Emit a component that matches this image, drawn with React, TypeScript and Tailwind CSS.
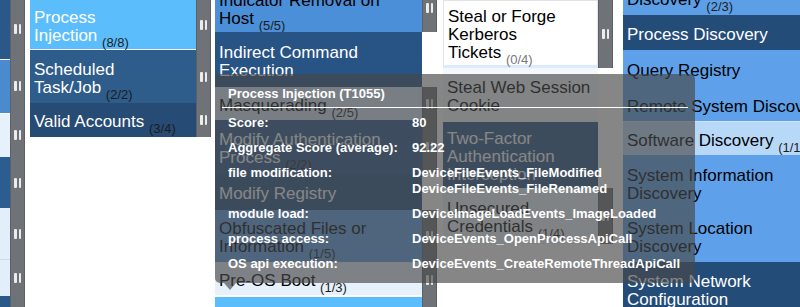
import React from 'react';

type Cell = {
  name?: string;
  count?: string;
  h: string;
  bg: string;
  fg?: string;
  handle?: boolean;
  countColor?: string;
  border?: string;
};

const Handle = () => (
  <div className="flex w-[15px] shrink-0 items-center justify-center gap-[2px] border-x border-[#5d6165] bg-[#6f7378]">
    <span className="h-[10px] w-[2.5px] rounded-[1px] bg-[#ececec]" />
    <span className="h-[10px] w-[2.5px] rounded-[1px] bg-[#ececec]" />
  </div>
);

const Row = ({ c, cellW }: { c: Cell; cellW: string }) => (
  <div className={`flex shrink-0 ${c.h}`}>
    <div className={`flex shrink-0 items-center px-[4px] pt-[4px] text-[17px] leading-[18px] ${cellW} ${c.bg} ${c.fg ?? 'text-black'} ${c.border ?? ''}`}>
      {c.name && (
        <span>
          {c.name}
          {c.count && (
            <>
              {'\u00a0'}
              <span className={`align-[-6px] text-[13px] leading-[0] ${c.countColor ?? 'text-[#1c1c1c]'}`}>{c.count}</span>
            </>
          )}
        </span>
      )}
    </div>
    {c.handle ? <Handle /> : <div className="w-[15px] shrink-0" />}
  </div>
);

const colA: Cell[] = [
  { h: 'h-[61px]', bg: 'bg-[#2a5888]', handle: true },
  { h: 'h-[54px]', bg: 'bg-[#4c8ad0]', handle: true, border: 'border-t border-white' },
  { h: 'h-[44px]', bg: 'bg-[#e7f1fc]', handle: true, border: 'border-t border-white' },
  { h: 'h-[51px]', bg: 'bg-[#2c5d90]', handle: true },
  { h: 'h-[51px]', bg: 'bg-[#e3eefb]', handle: true },
  { h: 'h-[37px]', bg: 'bg-[#e3eefb]', handle: true, border: 'border-t border-[#c9dcf2]' },
  { h: 'h-[40px]', bg: 'bg-[#2a5888]', handle: true },
];

const colB: Cell[] = [
  { name: 'Process Injection', count: '(8/8)', h: 'h-[50px]', bg: 'bg-[#5cbdfd]', fg: 'text-white', handle: true, border: 'border-b border-white' },
  { name: 'Scheduled Task/Job', count: '(2/2)', h: 'h-[53px]', bg: 'bg-[#2e5c8b]', fg: 'text-white', handle: true },
  { name: 'Valid Accounts', count: '(3/4)', h: 'h-[34px]', bg: 'bg-[#264b74]', fg: 'text-white', handle: true },
];

const colC: Cell[] = [
  { name: 'Indicator Removal on Host', count: '(5/5)', h: 'h-[48px]', bg: 'bg-[#4b8fd8]', handle: true },
  { name: 'Indirect Command Execution', h: 'h-[55px]', bg: 'bg-[#285385]', fg: 'text-white' },
  { name: 'Masquerading', count: '(2/5)', h: 'h-[33px]', bg: 'bg-[#d6e7f9]', handle: true },
  { name: 'Modify Authentication Process', count: '(2/2)', h: 'h-[54px]', bg: 'bg-[#2b5a8c]', fg: 'text-white', handle: true },
  { name: 'Modify Registry', h: 'h-[36px]', bg: 'bg-[#285385]', fg: 'text-white' },
  { name: 'Obfuscated Files or Information', count: '(1/5)', h: 'h-[52px]', bg: 'bg-[#5f9fe4]', handle: true },
  { name: 'Pre-OS Boot', count: '(1/3)', h: 'h-[35px]', bg: 'bg-[#e6f1fc]', handle: true, border: 'border-b-2 border-white' },
  { name: 'Process Injection', count: '(8/8)', h: 'h-[45px]', bg: 'bg-[#5cbdfd]', fg: 'text-white', handle: true },
];

const colD: Cell[] = [
  { name: 'Steal or Forge Kerberos Tickets', count: '(0/4)', h: 'h-[68px]', bg: 'bg-white', handle: true, countColor: 'text-[#777]', border: 'border border-[#e3e3e3] border-b-[3px] border-b-[#dcebfb]' },
  { name: 'Steal Web Session Cookie', h: 'h-[54px]', bg: 'bg-[#f4f8fd]' },
  { name: 'Two-Factor Authentication Interception', h: 'h-[66px]', bg: 'bg-[#2b5687]', fg: 'text-white' },
  { name: 'Unsecured Credentials', count: '(1/4)', h: 'h-[56px]', bg: 'bg-[#eef5fd]', handle: true },
];

const colE: Cell[] = [
  { name: 'Permission Groups Discovery', count: '(2/3)', h: 'h-[52px]', bg: 'bg-[#5c9fe7]' },
  { name: 'Process Discovery', h: 'h-[35px]', bg: 'bg-[#244c79]', fg: 'text-white' },
  { name: 'Query Registry', h: 'h-[38px]', bg: 'bg-[#5ea1ea]' },
  { name: 'Remote System Discovery', h: 'h-[33px]', bg: 'bg-[#5ea1ea]' },
  { name: 'Software Discovery', count: '(1/1)', h: 'h-[34px]', bg: 'bg-[#b8d8f8]', border: 'border-t border-[#cfe4fa]' },
  { name: 'System Information Discovery', h: 'h-[55px]', bg: 'bg-[#5ea1ea]' },
  { name: 'System Location Discovery', h: 'h-[52px]', bg: 'bg-[#5ea1ea]' },
  { name: 'System Network Configuration', h: 'h-[53px]', bg: 'bg-[#244c79]', fg: 'text-white' },
];

const tipRows: { label: string; values: string[] }[] = [
  { label: 'Score:', values: ['80'] },
  { label: 'Aggregate Score (average):', values: ['92.22'] },
  { label: 'file modification:', values: ['DeviceFileEvents_FileModified', 'DeviceFileEvents_FileRenamed'] },
  { label: 'module load:', values: ['DeviceImageLoadEvents_ImageLoaded'] },
  { label: 'process access:', values: ['DeviceEvents_OpenProcessApiCall'] },
  { label: 'OS api execution:', values: ['DeviceEvents_CreateRemoteThreadApiCall'] },
];

const Tooltip = () => (
  <div className="absolute left-[215px] top-[74px] h-[209px] w-[480px] rounded-[5px] bg-[rgba(72,72,72,0.66)] text-[13px] font-bold leading-[16px] text-white">
    <div className="pb-[5px] pl-[13px] pt-[12px]">Process Injection (T1055)</div>
    <div className="mx-[7px] h-px bg-white" />
    <div className="mt-[2px] pl-[13px]">
      {tipRows.map((r) => (
        <div key={r.label} className="grid grid-cols-[184px_1fr] py-[4.5px]">
          <div>{r.label}</div>
          <div className="flex flex-col">
            {r.values.map((v) => (
              <span key={v}>{v}</span>
            ))}
          </div>
        </div>
      ))}
    </div>
    <div className="absolute left-[9px] top-full h-0 w-0 border-x-[6px] border-t-[7px] border-x-transparent border-t-[rgba(72,72,72,0.66)]" />
  </div>
);

export default function App() {
  return (
    <div className="relative flex h-[307px] w-[800px] items-start overflow-hidden bg-white font-['Liberation_Sans',Arial,sans-serif]">
      <div className="-mt-[2px] flex w-[25px] shrink-0 flex-col">
        {colA.map((c, i) => (
          <Row key={i} c={c} cellW="w-[10px]" />
        ))}
      </div>
      <div className="flex w-[190px] shrink-0 flex-col pl-[5px]">
        {colB.map((c, i) => (
          <Row key={i} c={c} cellW="w-[166px]" />
        ))}
      </div>
      <div className="-mt-[16px] flex w-[222px] shrink-0 flex-col">
        {colC.map((c, i) => (
          <Row key={i} c={c} cellW="w-[207px]" />
        ))}
      </div>
      <div className="flex w-[181px] shrink-0 flex-col pl-[6px]">
        {colD.map((c, i) => (
          <Row key={i} c={c} cellW="w-[155px]" />
        ))}
      </div>
      <div className="-mt-[37px] flex w-[230px] shrink-0 flex-col pl-[5px]">
        {colE.map((c, i) => (
          <Row key={i} c={c} cellW="w-[210px]" />
        ))}
      </div>
      <Tooltip />
    </div>
  );
}
